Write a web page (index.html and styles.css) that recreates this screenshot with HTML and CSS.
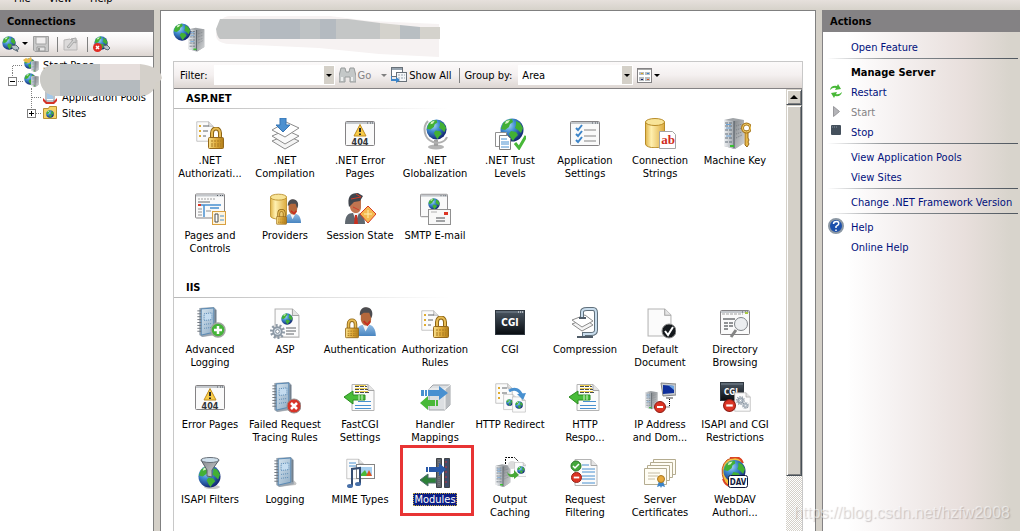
FILE: index.html
```html
<!DOCTYPE html>
<html lang="en">
<head>
  <meta charset="utf-8">
  <title>IIS Manager</title>
  <link rel="stylesheet" href="styles.css">
</head>
<body>
  <!-- shared icon parts -->
  <svg class="sprites" width="0" height="0" aria-hidden="true">
    <defs>
      <radialGradient id="g-sea" cx="35%" cy="30%" r="75%"><stop offset="0" stop-color="#a8d8f8"/><stop offset=".4" stop-color="#3f8bd0"/><stop offset="1" stop-color="#10206c"/></radialGradient>
      <linearGradient id="g-gold"><stop offset="0" stop-color="#f8e08c"/><stop offset=".5" stop-color="#e0ac3c"/><stop offset="1" stop-color="#b07c18"/></linearGradient>
      <linearGradient id="g-cyl"><stop offset="0" stop-color="#e0b448"/><stop offset=".3" stop-color="#fff0b0"/><stop offset="1" stop-color="#dcaa3c"/></linearGradient>
      <linearGradient id="g-steel"><stop offset="0" stop-color="#f0f2f4"/><stop offset="1" stop-color="#a0a6ac"/></linearGradient>
      <linearGradient id="g-side" x2="1" y2="1"><stop offset="0" stop-color="#84888c"/><stop offset="1" stop-color="#d4d6d8"/></linearGradient>
      <linearGradient id="g-dark" x2="0" y2="1"><stop offset="0" stop-color="#4c5864"/><stop offset="1" stop-color="#080c10"/></linearGradient>
      <linearGradient id="g-book" x2="1" y2="1"><stop offset="0" stop-color="#d4e4f0"/><stop offset="1" stop-color="#90acc4"/></linearGradient>
      <linearGradient id="g-shirt" x2="0" y2="1"><stop offset="0" stop-color="#90bce4"/><stop offset="1" stop-color="#4884c0"/></linearGradient>
    </defs>
    <symbol id="globe" viewBox="0 0 24 24">
      <circle cx="12" cy="12" r="11.500" fill="url(#g-sea)"/>
      <path d="M3 5 7 2l5-1 1 3-3 2-1 3-4 3-4-1zM11 13l5 1 2 3-3 3-2 3-2-3-2-4zM16 3l4 2 3 5-2 5-3-3-3-2 1-3z" fill="#42b034"/>
      <path d="M6 3l4-1-2 3-3 1z" fill="#d8f4c8"/>
    </symbol>
    <symbol id="page" viewBox="0 0 24 28">
      <path d="M1 1h16l6 6v20H1z" fill="#fbfbfb" stroke="#b4b4b4"/>
      <path d="M17 1v6h6" fill="#e4e4e4" stroke="#a4a4a4"/>
    </symbol>
    <symbol id="window" viewBox="0 0 30 25">
      <rect x=".5" y=".5" width="29" height="24" rx="1" fill="#fafafa" stroke="#848284"/>
      <path d="M1 2h28" stroke="#c4c8cc" stroke-width="2"/>
      <path d="M22 2h1M25 2h1M27 2h1" stroke="#505860"/>
    </symbol>
    <symbol id="lock" viewBox="0 0 16 22">
      <path d="M4 12V6c0-6 8-6 8 0v6" fill="none" stroke="#8c6414" stroke-width="4"/>
      <path d="M4 12V6c0-6 8-6 8 0v6" fill="none" stroke="#e8bc54" stroke-width="2"/>
      <rect x=".5" y="10.500" width="15" height="11" rx="1" fill="url(#g-gold)" stroke="#94681c"/>
      <path d="M3 14h10M3 17h10M3 19h10" stroke="#a87820" stroke-dasharray="2 1"/>
    </symbol>
    <symbol id="server" viewBox="0 0 22 32">
      <path d="M1 2l9-2 11 2v23l-9 6-11-3z" fill="#a0a4a8"/>
      <path d="M1 2l10 1v28L1 28z" fill="url(#g-steel)"/>
      <path d="M11 3l10-1v23l-9 6z" fill="url(#g-side)"/>
      <path d="M2 5h7M2 8h7M2 12h7M2 16h7M2 20h7M2 24h7" stroke="#606c78" stroke-dasharray="3 1"/>
      <path d="M3 6.500h5M3 10h5M3 18h5" stroke="#6ca4d8"/>
      <path d="M13 8l6-2M13 12l6-2M13 16l6-2M13 20l6-3" stroke="#787e84" stroke-dasharray="1 1"/>
      <path d="M11 3v27" stroke="#505860"/>
      <path d="M7 28h4" stroke="#38c030" stroke-width="2"/>
    </symbol>
    <symbol id="book" viewBox="0 0 24 32">
      <path d="M5 31 23 29l1-2-3-3z" fill="#c4c4c4"/>
      <path d="M3 1l15-1 3 3v25L6 31l-3-2z" fill="#98a4b0"/>
      <path d="M5 2l13-1v25L5 29z" fill="url(#g-book)" stroke="#5888b4"/>
      <path d="M8 7l8-1v7l-8 1z" fill="#c4dcf0" stroke="#5888b4" stroke-dasharray="1 1"/>
      <path d="M8 18l8-1M8 22l8-1" stroke="#5888b4" stroke-dasharray="1 1"/>
      <path d="M1 4h4M1 7h4M1 10h4M1 13h4M1 16h4M1 19h4M1 22h4M1 25h4" stroke="#6c747c"/>
      <path d="M19.500 3v23" stroke="#687480"/>
    </symbol>
    <symbol id="person" viewBox="0 0 22 32">
      <path d="M1 31c0-8 3-12 8-12h5c5 0 8 5 8 12z" fill="url(#g-shirt)"/>
      <path d="M8 19l3 7 4-7z" fill="#f4f4f4"/>
      <path d="M6 6c0-7 11-7 11 0v7c0 9-10 9-11 0z" fill="#b4683c"/>
      <path d="M5 9C4 0 12-1 15 1c4 2 4 8 2 11L15 6H9z" fill="#4c4c50"/>
      <path d="M9 15l4 4 3-4" stroke="#c83020" stroke-width="2" fill="none"/>
    </symbol>
    <symbol id="cyl" viewBox="0 0 20 30">
      <path d="M.5 4v22c0 5 19 5 19 0V4z" fill="url(#g-cyl)" stroke="#b88c28"/>
      <ellipse cx="10" cy="4" rx="9.500" ry="3.500" fill="#f8e498" stroke="#b88c28"/>
    </symbol>
    <symbol id="noentry" viewBox="0 0 12 12">
      <circle cx="6" cy="6" r="5.500" fill="#dc3424" stroke="#8c1c14"/>
      <path d="M3 6h6" stroke="#fff" stroke-width="2"/>
    </symbol>
    <symbol id="warnpage" viewBox="0 0 32 32">
      <use href="#window" x="1" y="3" width="30" height="25"/>
      <path d="M16 6.500l6 11.500H10z" fill="#f8cc48" stroke="#c08c20"/>
      <path d="M16 10v4M16 15.500v1.500" stroke="#282828" stroke-width="2"/>
    </symbol>
    <symbol id="authrules" viewBox="0 0 32 32">
      <use href="#page" x="2" y="0" width="18" height="27" preserveAspectRatio="none"/>
      <path d="M5 8h2M5 13h2M5 18h2" stroke="#e0ac30" stroke-width="2"/>
      <path d="M9 8h6M9 13h5M9 18h3" stroke="#606468"/>
      <use href="#lock" x="14" y="9" width="16" height="22"/>
    </symbol>
    <symbol id="response" viewBox="0 0 32 32">
      <use href="#page" x="7" y="0" width="24" height="31" preserveAspectRatio="none"/>
      <path d="M11 4.500h12M11 7.500h13M11 10.500h14" stroke="#484c50" stroke-dasharray="4 1"/>
      <path d="M11 3.500h11M11 6.500h12M11 9.500h13" stroke="#f0d050"/>
      <path d="M14 19.500h13M11 23.500h16M11 26.500h16" stroke="#4890d0"/>
      <path d="M0 15l9-6v4h12v5H9v4z" fill="#48bc38" stroke="#2c8c20"/>
      <path d="M15 13v5M18 13v5" stroke="#d8f4d0"/>
    </symbol>
    <symbol id="gear" viewBox="0 0 16 16">
      <circle cx="8" cy="8" r="6.500" fill="none" stroke="#8c98a4" stroke-width="3" stroke-dasharray="2 2"/>
      <circle cx="8" cy="8" r="4.500" fill="#dce4ec" stroke="#8c98a4" stroke-width="2"/>
      <circle cx="8" cy="8" r="2" fill="#fff" stroke="#788490"/>
    </symbol>
  </svg>

  <nav class="menubar">
    <button>File</button>
    <button>View</button>
    <button>Help</button>
  </nav>

  <div class="workspace">
    <aside class="connections">
      <h2 class="pane-title">Connections</h2>
      <div class="conn-tools">
        <button class="tool" aria-label="Connect">
          <svg width="18" height="18" viewBox="0 0 18 18"><use href="#globe" x="0" y="1" width="14" height="14"/><path d="M9 11l5-1 3 3-2 3-4-2z" fill="#b8c4cc" stroke="#586874"/><path d="M14 14l2 3" stroke="#586874"/></svg>
          <svg width="6" height="4" viewBox="0 0 6 4"><path d="M0 0h6L3 3z"/></svg>
        </button>
        <button class="tool save" aria-label="Save">
          <svg width="16" height="16" viewBox="0 0 16 16"><path d="M.5.5h15v15H2L.5 14z" fill="#c8c8c8" stroke="#a0a0a0"/><path d="M3 1h10v7H3z" fill="#f0eeee" stroke="#a4a4a4"/><path d="M4 11h8v4H4z" fill="#e4e4e4" stroke="#989898"/><path d="M6 12v3" stroke="#999" stroke-width="2"/></svg>
        </button>
        <span class="sep"></span>
        <button class="tool up" aria-label="Up">
          <svg width="16" height="16" viewBox="0 0 16 16"><path d="M1 4l6-1 1 1h6v10H1z" fill="#dcdada" stroke="#b8b6b6"/><path d="M4 11l6-7-2-1 5-1 0 5-2-1-5 6z" fill="#d0d0d0" stroke="#a8a8a8"/></svg>
        </button>
        <span class="sep"></span>
        <button class="tool" aria-label="Disconnect">
          <svg width="18" height="18" viewBox="0 0 18 18"><use href="#globe" x="1" y="1" width="14" height="14"/><path d="M10 11l4-1 3 3-2 2-3-1z" fill="#b8c4cc" stroke="#586874"/><circle cx="4.500" cy="12.500" r="4.500" fill="#e02c24"/><path d="M3 11l3 3M6 11l-3 3" stroke="#fff" stroke-width="1.500"/></svg>
        </button>
      </div>
      <ul class="tree">
        <li>
          <svg width="40" height="16" viewBox="0 0 40 16"><path d="M12.500 16V8.500H23" fill="none" stroke="#808080" stroke-dasharray="1 1"/><use href="#globe" x="24" y="1" width="11" height="11"/><path d="M23 3l3-2 2 1 3-2 1 3-3 3-4-1z" fill="#e8b848"/><use href="#server" x="31" y="3" width="8" height="13" preserveAspectRatio="none"/></svg>
          <span class="tree-root">Start Page</span>
        </li>
        <li>
          <svg width="40" height="16" viewBox="0 0 40 16"><path d="M12.500 0v4M18 8.500h5M31.500 15v1" fill="none" stroke="#808080" stroke-dasharray="1 1"/><rect x="8.500" y="4.500" width="8" height="8" fill="#fff" stroke="#808080"/><path d="M10 8.500h5" stroke="#000"/><use href="#globe" x="24" y="0" width="12" height="12"/><use href="#server" x="31" y="1" width="8" height="15" preserveAspectRatio="none"/></svg>
        </li>
        <li>
          <svg width="60" height="16" viewBox="0 0 60 16"><path d="M31.500 0v16M32 8.500h10" fill="none" stroke="#808080" stroke-dasharray="1 1"/><rect x="46" y="1" width="8" height="11" fill="#fff" stroke="#788490"/><path d="M47 5h6M47 7h6M47 9h6" stroke="#4890d0"/><path d="M43 9l4 4h6l4-4v3l-3 3h-8l-3-3z" fill="#d43428"/></svg>
          <span>Application Pools</span>
        </li>
        <li>
          <svg width="60" height="16" viewBox="0 0 60 16"><path d="M31.500 0v4M36 8.500h6" fill="none" stroke="#808080" stroke-dasharray="1 1"/><rect x="27.500" y="4.500" width="8" height="8" fill="#fff" stroke="#808080"/><path d="M29 8.500h5M31.500 6v5" stroke="#000"/><path d="M43.500 3.500h5l1-2h7v12h-13z" fill="#f4d468" stroke="#b89030"/><use href="#globe" x="46" y="5" width="8" height="8"/></svg>
          <span>Sites</span>
        </li>
      </ul>
      <svg class="blot" width="122" height="32" viewBox="0 0 122 32"><path d="M0 14Q2 0 18 0h82q20 2 22 14-2 5-6 4-2 14-16 14H14Q0 28 0 14z" fill="#d4d0ca"/><path d="M20 0v32h-6Q0 28 0 14 2 0 18 0z" fill="#cacac6"/><path d="M20 0h40v16H20z" fill="#bcc0c2"/><path d="M60 0h40v16H60z" fill="#e6dedc"/><path d="M20 16h80v16H20z" fill="#b4babe"/></svg>
    </aside>

    <main class="home">
      <header class="home-head">
        <svg width="32" height="32" viewBox="0 0 32 32"><use href="#server" x="15" y="4" width="17" height="28" preserveAspectRatio="none"/><use href="#globe" x="0" y="0" width="18" height="20"/></svg>
        <svg width="225" height="46" viewBox="0 0 225 46"><path d="M1 20Q3 1 15 1h100l40 5 69 3v33l-60-3-60-6-90-4Q1 28 1 20z" fill="#f6f2f2"/><path d="M5 4h40v20H5Q2 22 1 14z" fill="#c2c4c4"/><path d="M45 4h76v20H45z" fill="#b4bac0"/><path d="M85 4h20v20H85z" fill="#bec2c4"/><path d="M121 4h12l32 4v16h-44z" fill="#c4c6c6"/><path d="M165 8l20 2v14h-20zM205 12h20v12h-20z" fill="#d4d2cc"/><path d="M185 10l20 2v12h-20z" fill="#b8bec2"/></svg>
      </header>

      <div class="features">
        <div class="filterbar">
          <label for="filter">Filter:</label>
          <span class="combo">
            <input id="filter" type="text">
            <button class="drop" aria-label="Filter history"><svg width="6" height="3" viewBox="0 0 6 3"><path d="M0 0h6L3 3z"/></svg></button>
          </span>
          <button class="tool go" disabled>
            <svg width="17" height="16" viewBox="0 0 17 16"><path d="M2 1h4l1 4h3l1-4h4l2 8v6h-6v-5H6v5H0V9z" fill="#c4c8c8" stroke="#989c9c"/><path d="M2 10h2v4H2zM12 10h2v4h-2z" fill="#eceeee"/></svg>
            Go
            <svg class="go-arrow" width="6" height="3" viewBox="0 0 6 3"><path d="M0 0h6L3 3z" fill="#808080"/></svg>
          </button>
          <button class="tool">
            <svg width="16" height="16" viewBox="0 0 16 16"><rect x=".5" y=".5" width="11" height="9" fill="#fff" stroke="#687078"/><path d="M1 2h10" stroke="#98a4b0" stroke-width="2"/><rect x="5.500" y="5.500" width="10" height="9" fill="#f4f6f8" stroke="#687078"/><path d="M7 8h7M7 11h7" stroke="#98a4b0" stroke-dasharray="2 1"/><path d="M1 9v3h4v-2l4 3-4 3v-2H0V9z" fill="#3c84c8"/></svg>
            Show All
          </button>
          <span class="sep"></span>
          <label for="group">Group by:</label>
          <span class="combo short">
            <select id="group"><option>Area</option></select>
            <span class="drop over"><svg width="6" height="3" viewBox="0 0 6 3"><path d="M0 0h6L3 3z"/></svg></span>
          </span>
          <button class="tool" aria-label="Views">
            <svg width="15" height="15" viewBox="0 0 15 15"><rect x=".5" y=".5" width="14" height="14" fill="#fff" stroke="#848284"/><path d="M1 1.500h13" stroke="#a8a8a8"/><path d="M2 4h5v3H2zM8 4h5v3H8zM2 9h5v4H2zM8 9h5v4H8z" fill="#b8bcc0"/><path d="M4 5h2v1H4z" fill="#d8a420"/><path d="M10 5h2v1h-2z" fill="#3c84c8"/><path d="M4 11h2v1H4z" fill="#10206c"/><path d="M10 11h2v1h-2z" fill="#dc5420"/></svg>
            <svg width="6" height="3" viewBox="0 0 6 3"><path d="M0 0h6L3 3z"/></svg>
          </button>
        </div>

        <div class="feature-view">
          <div class="groups">
            <section class="group">
              <h3>ASP.NET</h3>
              <div class="grid">
                <button class="feature"><svg viewBox="0 0 32 32"><use href="#authrules"/></svg><span>.NET<br>Authorizati...</span></button>
                <button class="feature"><svg viewBox="0 0 32 32"><path d="M3 23l14-6 13 6-14 8z" fill="#f4f4f4" stroke="#8c8c8c"/><path d="M3 18l14-6 13 6-14 8z" fill="#fafafa" stroke="#8c8c8c"/><path d="M3 12l14-8 13 6-14 9z" fill="#fff" stroke="#8c8c8c"/><path d="M11 0h6v7h4l-7 7-7-7h4z" fill="#4c90d0" stroke="#3474b4"/></svg><span>.NET<br>Compilation</span></button>
                <button class="feature"><svg viewBox="0 0 32 32"><use href="#warnpage"/><text x="16" y="27" class="t404">404</text></svg><span>.NET Error<br>Pages</span></button>
                <button class="feature"><svg viewBox="0 0 32 32"><ellipse cx="17" cy="29" rx="8" ry="2.500" fill="#b4b4b4"/><path d="M15 22h4v6h-4z" fill="#a0a0a0"/><path d="M9 3C3 9 5 21 14 24c6 2 12 0 14-5" fill="none" stroke="#b0b0b0" stroke-width="2"/><use href="#globe" x="7" y="1" width="21" height="21"/></svg><span>.NET<br>Globalization</span></button>
                <button class="feature"><svg viewBox="0 0 32 32"><use href="#globe" x="6" y="0" width="24" height="24"/><path d="M1.500 14.500h11v14h-11z" fill="#fff" stroke="#909090"/><path d="M5.500 17.500h8l3 3v11h-11z" fill="#fff" stroke="#808080"/><path d="M7 21h6M7 24h8M7 26h8M7 29h8" stroke="#4890d0"/><path d="M21 25l4 5 7-12" fill="none" stroke="#48b838" stroke-width="3"/></svg><span>.NET Trust<br>Levels</span></button>
                <button class="feature"><svg viewBox="0 0 32 32"><use href="#window" x="1" y="3" width="30" height="25"/><path d="M7 10l2 2 4-5M7 16l2 2 4-5M7 22l2 2 4-5" fill="none" stroke="#3c84c8" stroke-width="2"/><path d="M15 12h12M15 18h12M15 23h12" stroke="#848484"/></svg><span>Application<br>Settings</span></button>
                <button class="feature"><svg viewBox="0 0 32 32"><use href="#cyl" x="1" y="0" width="20" height="30"/><path d="M15.500 13.500h13l3 3v14h-16z" fill="#fff" stroke="#a4a4a4"/><text x="24" y="26" class="tab">ab</text></svg><span>Connection<br>Strings</span></button>
                <button class="feature"><svg viewBox="0 0 32 32"><use href="#server" x="4" y="0" width="22" height="32"/><path d="M26 13v14l2 2 2-3-1-2 1-2-1-2V13z" fill="#e8b848" stroke="#94681c"/><circle cx="27.500" cy="10" r="4" fill="none" stroke="#a87820" stroke-width="3"/><circle cx="27.500" cy="10" r="4" fill="none" stroke="#f4d068"/></svg><span>Machine Key</span></button>
                <button class="feature"><svg viewBox="0 0 32 32"><use href="#window" x="1" y="0" width="30" height="26"/><path d="M4 6h17" stroke="#a0a0a0" stroke-dasharray="2 1"/><path d="M4 9h12" stroke="#606468"/><path d="M4 12h3" stroke="#dc3424" stroke-width="2"/><path d="M7 12h20M10 12v12M16 15h9" stroke="#4890d0" stroke-width="1.500"/><path d="M4 16h4M4 19h4M4 22h4M12 18h5" stroke="#909090"/><rect x="18.500" y="18.500" width="13" height="13" fill="#fff4dc" stroke="#d8a040"/><path d="M21 21h3v8h-3z" fill="#fff" stroke="#484c50"/><path d="M26 23h4M26 27h4" stroke="#4890d0"/></svg><span>Pages and<br>Controls</span></button>
                <button class="feature"><svg viewBox="0 0 32 32"><use href="#cyl" x="1" y="0" width="17" height="27" preserveAspectRatio="none"/><use href="#person" x="15" y="5" width="17" height="27" preserveAspectRatio="none"/><use href="#lock" x="7" y="16" width="11" height="16"/></svg><span>Providers</span></button>
                <button class="feature"><svg viewBox="0 0 32 32"><path d="M1 31c0-8 3-11 8-11h4c5 0 8 4 8 11z" fill="#606870"/><path d="M9 20l3 8 3-8z" fill="#f4f4f4"/><path d="M11 22h2l1 9h-4z" fill="#c83020"/><path d="M6 7c0-6 11-6 11 0v7c0 8-10 8-11 0z" fill="#c07450"/><path d="M5 14C3 4 6 0 14 0l5 3-3 5-6 1z" fill="#40444c"/><path d="M7 6l10-2M12 1l5 3M9 14l6 3" stroke="#d03c28"/><path d="M24 13l8 8-8 9-8-9z" fill="#f4b850" stroke="#d83c24"/><path d="M24 17v8M20 21h8" stroke="#fff0b0"/></svg><span>Session State</span></button>
                <button class="feature"><svg viewBox="0 0 32 32"><use href="#window" x="1" y="0" width="28" height="25" preserveAspectRatio="none"/><use href="#globe" x="9" y="5" width="12" height="12"/><rect x="9.500" y="16.500" width="22" height="15" fill="#f8f8f8" stroke="#909090"/><path d="M25 19h4v3h-4z" fill="#dc3424"/><path d="M12 19h6" stroke="#b0b0b0"/><path d="M17 25h9M17 28h9" stroke="#484c50"/></svg><span>SMTP E-mail</span></button>
              </div>
            </section>

            <section class="group">
              <h3>IIS</h3>
              <div class="grid">
                <button class="feature"><svg viewBox="0 0 32 32"><use href="#book" x="2" y="0" width="24" height="31"/><circle cx="24" cy="23" r="7" fill="#44b438" stroke="#a0a4a0" stroke-width="1.500"/><path d="M24 19v8M20 23h8" stroke="#fff" stroke-width="2.500"/></svg><span>Advanced<br>Logging</span></button>
                <button class="feature"><svg viewBox="0 0 32 32"><use href="#page" x="5" y="0" width="26" height="32" preserveAspectRatio="none"/><use href="#globe" x="12" y="6" width="12" height="12"/><path d="M17 21h10M17 24h10M17 27h8" stroke="#606468"/><use href="#gear" x="1" y="17" width="15" height="15"/></svg><span>ASP</span></button>
                <button class="feature"><svg viewBox="0 0 32 32"><use href="#person" x="11" y="0" width="21" height="30" preserveAspectRatio="none"/><use href="#lock" x="1" y="11" width="14" height="21"/></svg><span>Authentication</span></button>
                <button class="feature"><svg viewBox="0 0 32 32"><use href="#authrules"/></svg><span>Authorization<br>Rules</span></button>
                <button class="feature"><svg viewBox="0 0 32 32"><rect x="1.500" y="3.500" width="29" height="24" fill="url(#g-dark)" stroke="#303840"/><path d="M2 5h28" stroke="#788490"/><path d="M24 5h5" stroke="#fff" stroke-dasharray="1 1"/><text x="16" y="19" class="tcgi">CGI</text></svg><span>CGI</span></button>
                <button class="feature"><svg viewBox="0 0 32 32"><path d="M3 17l13-5 8 6-11 6z" fill="#f4f4f4" stroke="#8c8c8c"/><path d="M3 13l13-5 8 6-11 6z" fill="#fff" stroke="#8c8c8c"/><path d="M13 10V5q0-3 5-3h6q3 0 3 4v17q0 4-5 4h-7v3" fill="none" stroke="#60707c" stroke-width="4"/><path d="M13 10V5q0-3 5-3h6q3 0 3 4v17q0 4-5 4h-7v3" fill="none" stroke="#c8dcec" stroke-width="2"/><path d="M8 30h16M10 11h7" stroke="#505c68" stroke-width="2"/></svg><span>Compression</span></button>
                <button class="feature"><svg viewBox="0 0 32 32"><use href="#page" x="3" y="0" width="25" height="31" preserveAspectRatio="none"/><circle cx="25" cy="24" r="7" fill="#14181c" stroke="#888"/><path d="M21 24l3 4 5-8" fill="none" stroke="#fff" stroke-width="2"/></svg><span>Default<br>Document</span></button>
                <button class="feature"><svg viewBox="0 0 32 32"><use href="#window" x="1" y="2" width="30" height="27"/><path d="M3 7h21" stroke="#a0a0a0" stroke-dasharray="3 1"/><path d="M26 5h3v2h-3z" fill="#a8c840"/><path d="M4 12h12M5 16h4M10 16h4M5 19h4M10 19h4M5 22h4" stroke="#282c30"/><path d="M17 23l-5 7" stroke="#848484" stroke-width="3"/><circle cx="22" cy="17" r="6.500" fill="#eceef0" stroke="#808488"/></svg><span>Directory<br>Browsing</span></button>

                <button class="feature"><svg viewBox="0 0 32 32"><use href="#warnpage"/><text x="16" y="27" class="t404">404</text></svg><span>Error Pages</span></button>
                <button class="feature"><svg viewBox="0 0 32 32"><use href="#book" x="2" y="0" width="24" height="31"/><circle cx="25" cy="24" r="7" fill="#d83428" stroke="#909090"/><path d="M22 21l6 6M28 21l-6 6" stroke="#fff" stroke-width="2.500"/></svg><span>Failed Request<br>Tracing Rules</span></button>
                <button class="feature"><svg viewBox="0 0 32 32"><use href="#response"/></svg><span>FastCGI<br>Settings</span></button>
                <button class="feature"><svg viewBox="0 0 32 32"><path d="M10 7l4-4h17v20l-5 5H10z" fill="#dcdfe2" stroke="#a0a4a8"/><path d="M26 7v21l5-5V3z" fill="#b8bcc0"/><path d="M10 7h16v21M26 7l5-4" fill="none" stroke="#f4f4f4"/><path d="M2 8h3v6H2zM6 8h2v6H6zM9 8h11V4l9 7-9 7v-4H9z" fill="#4890d0"/><path d="M1 21l8-7v4h7v6H9v4zM17 18h2v6h-2z" fill="#48b838"/></svg><span>Handler<br>Mappings</span></button>
                <button class="feature"><svg viewBox="0 0 32 32"><use href="#page" x="1" y="0" width="18" height="23" preserveAspectRatio="none"/><path d="M4 6h2M4 11h2M4 16h2" stroke="#e0ac30" stroke-width="2"/><path d="M8 6h5M8 11h5" stroke="#606468"/><use href="#page" x="9" y="11" width="14" height="18" preserveAspectRatio="none"/><use href="#globe" x="12" y="17" width="7" height="7"/><use href="#page" x="18" y="13" width="14" height="19" preserveAspectRatio="none"/><use href="#globe" x="21" y="19" width="8" height="8"/><path d="M15 9q9-5 13 5" fill="none" stroke="#4890d0" stroke-width="3"/><path d="M23 12l9-1-3 7z" fill="#4890d0"/></svg><span>HTTP Redirect</span></button>
                <button class="feature"><svg viewBox="0 0 32 32"><use href="#response"/></svg><span>HTTP<br>Respo...</span></button>
                <button class="feature"><svg viewBox="0 0 32 32"><use href="#server" x="1" y="8" width="13" height="21" preserveAspectRatio="none"/><path d="M17 1l15 1v11l-13 1z" fill="#c8ccd0" stroke="#848484"/><path d="M19 3l11 1v7l-11 1z" fill="#10309c"/><path d="M24 3l6 1v4z" fill="#6ca4e4"/><path d="M22 16h7" stroke="#a0a0a0" stroke-width="2"/><path d="M25.500 17v8H20" stroke="#000" fill="none" stroke-dasharray="1 1"/><use href="#noentry" x="10" y="19" width="12" height="12"/></svg><span>IP Address<br>and Dom...</span></button>
                <button class="feature"><svg viewBox="0 0 32 32"><rect x="1.500" y=".5" width="23" height="18" fill="url(#g-dark)" stroke="#303840"/><path d="M2 2h22" stroke="#788490"/><text x="12" y="13" class="tcgi small">CGI</text><use href="#page" x="15" y="9" width="17" height="22" preserveAspectRatio="none"/><use href="#gear" x="17" y="14" width="9" height="9"/><use href="#gear" x="23" y="20" width="7" height="7"/><use href="#noentry" x="4" y="17" width="13" height="13"/></svg><span>ISAPI and CGI<br>Restrictions</span></button>

                <button class="feature"><svg viewBox="0 0 32 32"><ellipse cx="18" cy="30" rx="8" ry="2" fill="#c8c8c8"/><use href="#globe" x="4" y="8" width="23" height="23"/><path d="M7 3l6 10v6l5 1v-7l7-10z" fill="url(#g-side)" stroke="#586068"/><ellipse cx="16" cy="3" rx="9" ry="2.500" fill="#d0e0ec" stroke="#687078"/></svg><span>ISAPI Filters</span></button>
                <button class="feature"><svg viewBox="0 0 32 32"><use href="#book" x="4" y="0" width="24" height="31"/></svg><span>Logging</span></button>
                <button class="feature"><svg viewBox="0 0 32 32"><use href="#page" x="2" y="0" width="18" height="24" preserveAspectRatio="none"/><path d="M5 6h7M5 9h10" stroke="#4890d0"/><rect x="12.500" y="7.500" width="18" height="14" fill="#fff" stroke="#848484"/><rect x="15" y="10" width="13" height="9" fill="#a8d0f0"/><path d="M15 19l6-6 3 6z" fill="#48b838"/><path d="M22 19l3-6 3 6z" fill="#dc5420"/><path d="M8 29V12l8-1v16" fill="none" stroke="#344c70" stroke-width="2"/><ellipse cx="6" cy="29" rx="3" ry="2" fill="#4870a8"/><ellipse cx="14" cy="27" rx="3" ry="2" fill="#4870a8"/></svg><span>MIME Types</span></button>
                <button class="feature marked"><svg viewBox="0 0 32 32"><path d="M17.500 1.500h5v29h-5z" fill="#60646c" stroke="#404448"/><path d="M25.500 1.500h5v29h-5z" fill="#404c68" stroke="#404448"/><path d="M20 3v26" stroke="#84888c" stroke-dasharray="1 1"/><path d="M27 4v24" stroke="#c83040" stroke-dasharray="2 3"/><path d="M7 10h2v5H7zM10 10h10V6l7 6-7 7v-4H10z" fill="#2858a8"/><path d="M1 23l8-6v4h8v5H9v3z" fill="#2c8038" stroke="#506c70"/></svg><span>Modules</span></button>
                <button class="feature"><svg viewBox="0 0 32 32"><path d="M11.500 16V.5h9l4 4" fill="none" stroke="#000" stroke-dasharray="2 1"/><use href="#server" x="1" y="7" width="16" height="24" preserveAspectRatio="none"/><circle cx="18" cy="8" r="4" fill="#dcdcdc"/><use href="#page" x="20" y="4" width="13" height="17" preserveAspectRatio="none"/><use href="#globe" x="23" y="9" width="8" height="8"/><path d="M13 15q3 4 7 1v-3l5 5-5 4v-2q-6 1-7-5z" fill="#48a838"/></svg><span>Output<br>Caching</span></button>
                <button class="feature"><svg viewBox="0 0 32 32"><use href="#page" x="5" y="1" width="24" height="29" preserveAspectRatio="none"/><path d="M13 8h7M13 12h13M13 15h13M13 19h13M13 22h13M13 26h13" stroke="#4890d0"/><circle cx="7" cy="9" r="5" fill="#44a83c" stroke="#2c7828"/><path d="M4 9l2 2 4-4" fill="none" stroke="#fff" stroke-width="1.500"/><use href="#noentry" x="2" y="15" width="11" height="11"/></svg><span>Request<br>Filtering</span></button>
                <button class="feature"><svg viewBox="0 0 32 32"><g fill="#fffdf4" stroke="#b4ac90"><path d="M9.500 2.500h22v15h-22z"/><path d="M6.500 5.500h22v15h-22z"/><path d="M3.500 8.500h22v15h-22z"/><path d="M.5 11.500h22v16H.5z"/></g><path d="M4 16h12M4 19h10M4 22h7" stroke="#c4bca4"/><path d="M15 24l-2 6 3-1 1 2 1-2 3 1-2-6z" fill="#3c84c8"/><circle cx="17" cy="22" r="3.500" fill="#e8a838" stroke="#a87820"/></svg><span>Server<br>Certificates</span></button>
                <button class="feature"><svg viewBox="0 0 32 32"><path d="M8 3Q0 10 5 24q4 6 9 4L23 3Q17-2 8 3z" fill="#f0c040" stroke="#c85024"/><path d="M11 1q10-3 13 5M4 22q3 8 9 7" fill="none" stroke="#dc4424" stroke-width="2"/><use href="#globe" x="4" y="2" width="23" height="24"/><rect x="9.500" y="18.500" width="19" height="12" rx="2" fill="#fff" stroke="#10183c"/><text x="19" y="28" class="tdav">DAV</text></svg><span>WebDAV<br>Authori...</span></button>
              </div>
            </section>
          </div>
          <div class="scrollbar">
            <button class="scroll-up" aria-label="Scroll up"><svg width="8" height="4" viewBox="0 0 8 4"><path d="M0 4h8L4 0z"/></svg></button>
            <div class="thumb"></div>
          </div>
        </div>
      </div>
    </main>

    <aside class="actions">
      <h2 class="pane-title">Actions</h2>
      <div class="action-list">
        <a href="#">Open Feature</a>
        <hr>
        <h3>Manage Server</h3>
        <a href="#"><svg width="16" height="16" viewBox="0 0 16 16"><path d="M2 7q1-5 7-4l1-2 3 5-6 1 1-2q-3-1-6 2zM14 9q-1 5-7 4l-1 2-3-5 6-1-1 2q3 1 6-2z" fill="#48b838"/></svg>Restart</a>
        <span class="off"><svg width="16" height="16" viewBox="0 0 16 16"><path d="M5.500 3.500l6 5-6 5z" fill="#b4b4b8" stroke="#98989c"/></svg>Start</span>
        <a href="#"><svg width="16" height="16" viewBox="0 0 16 16"><rect x="3" y="2" width="10" height="10" rx="1" fill="#44505c"/><path d="M4 4h5" stroke="#8c98a4" stroke-dasharray="1 1"/></svg>Stop</a>
        <hr>
        <a href="#">View Application Pools</a>
        <a href="#">View Sites</a>
        <hr>
        <a href="#">Change .NET Framework Version</a>
        <hr>
        <a href="#"><svg width="16" height="16" viewBox="0 0 16 16"><circle cx="8" cy="8" r="7" fill="#1c50ac" stroke="#8c98a4" stroke-width="2"/><path d="M5.500 6q0-2.500 3-2.500t2 3L8 8.500V10M8 11.500V13" fill="none" stroke="#fff" stroke-width="1.500"/></svg>Help</a>
        <a href="#">Online Help</a>
      </div>
    </aside>
  </div>
  <div class="watermark">https://blog.csdn.net/hzfw2008</div>
</body>
</html>
```
FILE: styles.css
```css
* {
    box-sizing: border-box;
}
body {
    margin: 0;
    height: 100vh;
    overflow: hidden;
    display: flex;
    flex-direction: column;
    background-color: #d4d0c8;
    color: #000;
    font-family: "DejaVu Sans Condensed", "Noto Sans", sans-serif;
    font-size: 11px;
    line-height: 13px;
}
button, input, select {
    font: inherit;
    color: inherit;
    margin: 0;
    padding: 0;
    border: none;
    border-radius: 0;
    background: none;
}
h2, h3, ul {
    margin: 0;
    padding: 0;
    font-size: 11px;
}
svg {
    flex: none;
    display: block;
}
.sprites {
    position: absolute;
}

/* menu */
.menubar {
    display: flex;
    align-items: flex-end;
    gap: 18px;
    height: 10px;
    padding: 0 14px 5px;
    background: linear-gradient(#e6e0dc, #d6d2ca);
}
.workspace {
    flex: 1;
    min-height: 0;
    display: flex;
    gap: 6px;
}
.pane-title {
    height: 22px;
    padding-left: 7px;
    line-height: 24px;
    background-color: #848284;
}
.tool {
    display: flex;
    align-items: center;
    gap: 2px;
}
.sep {
    width: 1px;
    height: 15px;
    background-color: #808080;
}

/* connections */
.connections {
    position: relative;
    flex: 0 0 154px;
    background-color: #fff;
    border-right: 1px solid #808080;
}
.conn-tools {
    display: flex;
    align-items: center;
    gap: 5px;
    height: 25px;
    padding-left: 2px;
    border-bottom: 1px solid #808080;
    background: linear-gradient(#fff, #f4f0f0 50%, #ddd6d2);
}
.conn-tools .save, .conn-tools .up {
    margin-right: 3px;
}
.tree {
    list-style: none;
}
.tree li {
    display: flex;
    align-items: center;
    gap: 2px;
    height: 16px;
    white-space: nowrap;
}
.tree-root {
    padding-left: 1px;
}
.blot {
    position: absolute;
    top: 54px;
    left: 40px;
    z-index: 1;
}

/* center page */
.home {
    flex: 1;
    min-width: 0;
    display: flex;
    flex-direction: column;
    padding: 0 12px;
    background-color: #fff;
    border: 1px solid #808080;
    border-bottom: none;
}
.home-head {
    display: flex;
    align-items: center;
    gap: 10px;
    height: 50px;
    padding-top: 4px;
}
.features {
    flex: 1;
    min-height: 0;
    display: flex;
    flex-direction: column;
    border: 1px solid #c8c8c8;
    border-bottom: none;
}
.filterbar {
    display: flex;
    align-items: center;
    gap: 4px;
    height: 27px;
    padding-left: 6px;
    border-bottom: 1px solid #848284;
    background: linear-gradient(#fcfafa, #f4f0f0 50%, #ddd6d2);
    white-space: nowrap;
}
.filterbar label {
    padding-right: 2px;
}
.filterbar .sep {
    margin-left: 4px;
}
.combo {
    position: relative;
    display: flex;
    width: 121px;
    height: 20px;
    padding: 1px;
    background-color: #fff;
}
.combo.short {
    width: 115px;
}
.combo input {
    flex: 1;
    min-width: 0;
    outline: none;
}
.combo select {
    width: 100%;
    padding-left: 3px;
    appearance: none;
}
.drop {
    width: 10px;
    display: flex;
    align-items: center;
    justify-content: center;
    background-color: #d4d0c8;
}
.drop.over {
    position: absolute;
    top: 1px;
    right: 1px;
    bottom: 1px;
    pointer-events: none;
}
.go {
    color: #848284;
}
.go-arrow {
    margin-left: 8px;
}
.feature-view {
    flex: 1;
    min-height: 0;
    display: flex;
}
.groups {
    flex: 1;
    min-width: 0;
    overflow: hidden;
}
.group {
    padding-bottom: 10px;
}
.group h3 {
    height: 20px;
    padding-left: 12px;
    line-height: 19px;
    border-bottom: 1px solid;
    border-image: linear-gradient(to right, #b8b8b8, #fff 45%) 1;
}
.grid {
    display: grid;
    grid-template-columns: repeat(auto-fill, 75px);
    grid-auto-rows: 75px;
    padding-top: 9px;
}
.feature {
    position: relative;
    display: flex;
    flex-direction: column;
    align-items: center;
    gap: 4px;
    padding-right: 3px;
    white-space: nowrap;
    text-align: center;
}
.feature svg {
    width: 32px;
    height: 32px;
}
.marked span {
    padding: 0 1px;
    background-color: #0a1c84;
    outline: 1px dotted #c8a838;
    outline-offset: -1px;
    color: #fff;
}
.marked::after {
    content: "";
    position: absolute;
    top: -12px;
    right: 0;
    bottom: 16px;
    left: 1px;
    border: 3px solid #e83434;
}
.t404, .tcgi, .tab, .tdav {
    text-anchor: middle;
    font-weight: bold;
}
.t404 {
    font-size: 9px;
    fill: #303438;
}
.tcgi {
    font-size: 10px;
    fill: #fff;
}
.tcgi.small {
    font-size: 8px;
}
.tab {
    font-family: "Liberation Serif", serif;
    font-size: 13px;
    fill: #d02c20;
}
.tdav {
    font-size: 8px;
    fill: #10183c;
}

/* scrollbar */
.scrollbar {
    width: 16px;
    display: flex;
    flex-direction: column;
    background: repeating-conic-gradient(#fff 0 25%, #d4d0c8 0 50%) 0 0 / 2px 2px;
}
.scroll-up, .thumb {
    background-color: #d4d0c8;
    border: 1px solid;
    border-color: #d4d0c8 #485058 #485058 #d4d0c8;
    box-shadow: inset 1px 1px #fff, inset -1px -1px #808080;
}
.scroll-up {
    height: 16px;
    display: flex;
    align-items: center;
    justify-content: center;
}
.thumb {
    height: 84%;
}

/* actions */
.actions {
    flex: 0 0 198px;
    border-left: 1px solid #848284;
    background: linear-gradient(to right, #fff 12%, #f6f2f2 35%, #e8dfdc 72%, #d8d4cc 95%);
}
.action-list {
    padding: 5px 2px 0 4px;
    white-space: nowrap;
}
.action-list a, .action-list .off, .action-list h3 {
    position: relative;
    display: block;
    height: 20px;
    padding-left: 24px;
    line-height: 22px;
    text-decoration: none;
}
.action-list a {
    color: #00107c;
}
.action-list .off {
    color: #848284;
}
.action-list svg {
    position: absolute;
    top: 1px;
    left: 1px;
}
.action-list hr {
    height: 1px;
    margin: 1px 0 3px;
    border: none;
    background: linear-gradient(to right, #fff, #909498 30%, #505860);
}
.watermark {
    position: absolute;
    right: 10px;
    bottom: 8px;
    font-family: "Liberation Sans", sans-serif;
    font-size: 16px;
    line-height: 20px;
    color: rgba(255, 255, 255, 0.5);
    text-shadow: 1px 1px 1px rgba(120, 110, 110, 0.35);
}
```
